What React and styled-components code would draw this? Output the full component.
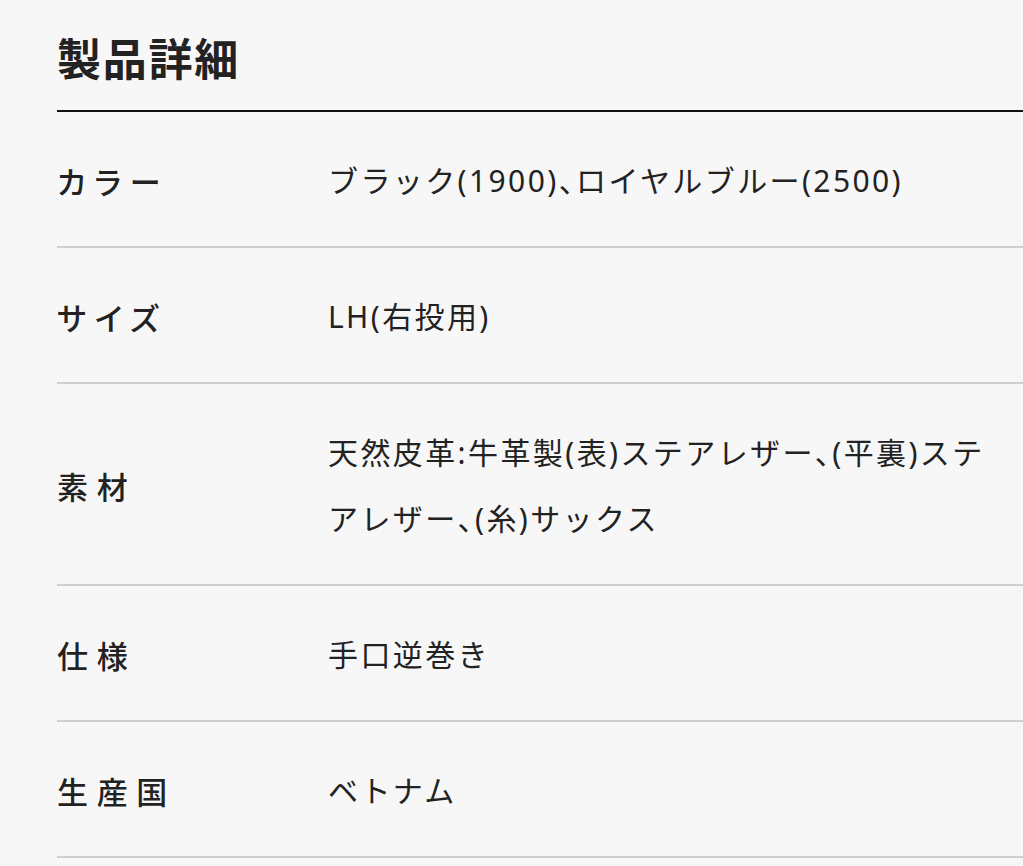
import styled, { createGlobalStyle } from 'styled-components';

const GlobalStyle = createGlobalStyle`
  html, body {
    margin: 0;
    padding: 0;
    background: #f7f7f7;
    overflow-x: hidden;
  }
  body {
    font-family: "Noto Sans CJK JP", "Noto Sans", sans-serif;
    color: #222;
  }
`;

const Section = styled.section`
  padding-left: 57px;
  width: 966px;
`;

const Title = styled.h2`
  margin: 0;
  padding: 24px 0 20px;
  font-size: 44px;
  line-height: 66px;
  font-weight: 700;
  letter-spacing: 0.04em;
  border-bottom: 2px solid #111;
`;

const Row = styled.div`
  display: grid;
  grid-template-columns: 271px 1fr;
  align-items: center;
  padding: 36px 0 32px;
  border-bottom: 2px solid #cfcfcf;
`;

const Label = styled.div`
  font-size: 31px;
  font-weight: 500;
  line-height: 66px;
  letter-spacing: 0.28em;
  font-feature-settings: "palt";
  white-space: nowrap;
`;

const Value = styled.div`
  font-family: "Noto Sans", "Noto Sans CJK JP", sans-serif;
  font-size: 30px;
  font-weight: 400;
  line-height: 66px;
  letter-spacing: 0.08em;
  padding-right: 14px;
`;

const Comma = styled.span`
  font-family: "Noto Sans CJK JP", sans-serif;
  font-feature-settings: "halt";
  line-height: 0;
`;

const details = [
  { label: 'カラー', value: 'ブラック(1900)、ロイヤルブルー(2500)' },
  { label: 'サイズ', value: 'LH(右投用)' },
  { label: '素材', value: '天然皮革:牛革製(表)ステアレザー、(平裏)ステアレザー、(糸)サックス' },
  { label: '仕様', value: '手口逆巻き' },
  { label: '生産国', value: 'ベトナム' },
];

// 読点だけ半角幅で詰める
const renderValue = (text) =>
  text.split('、').flatMap((part, i) =>
    i === 0 ? [part] : [<Comma key={i}>、</Comma>, part]
  );

const App = () => {
  return (
    <>
      <GlobalStyle />
      <Section>
        <Title>製品詳細</Title>
        {details.map((d) => (
          <Row key={d.label}>
            <Label>{d.label}</Label>
            <Value>{renderValue(d.value)}</Value>
          </Row>
        ))}
      </Section>
    </>
  );
};

export default App;
